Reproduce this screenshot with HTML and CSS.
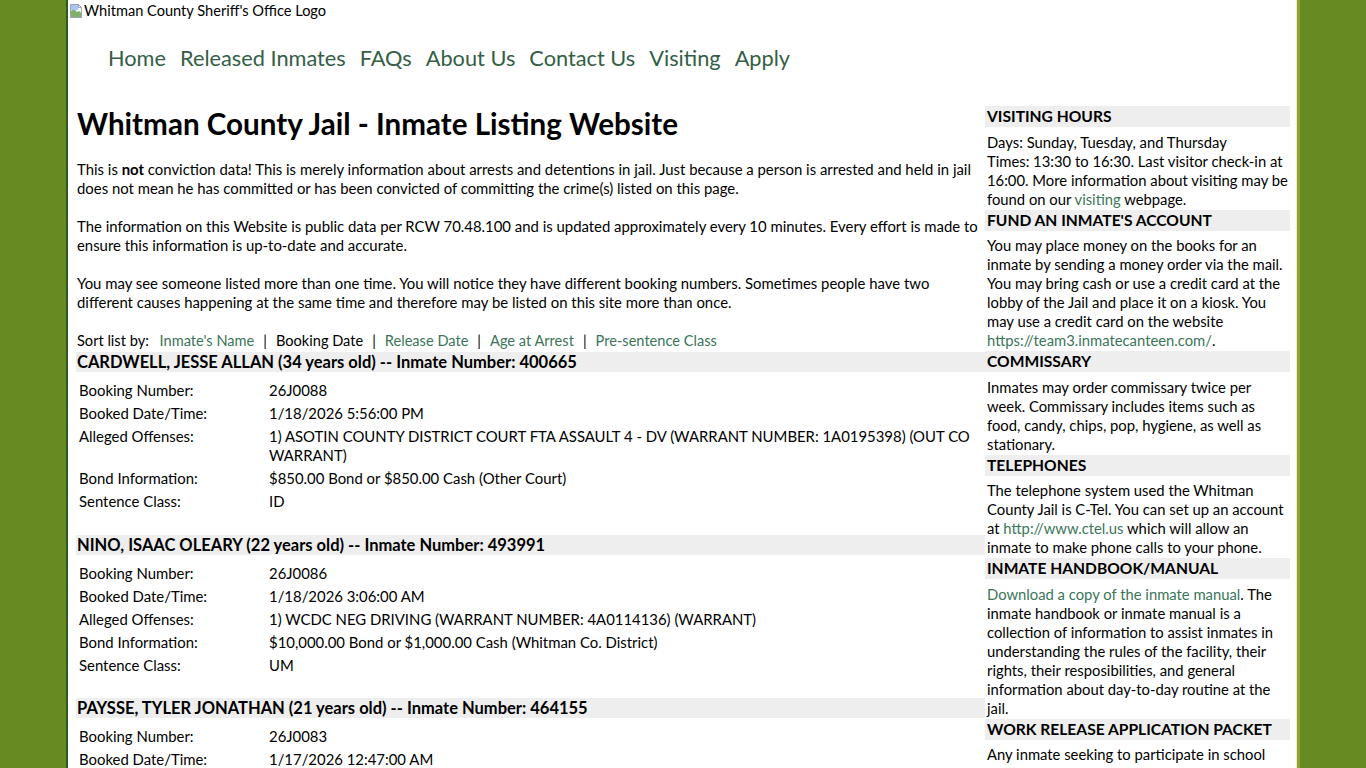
FILE: index.html
```html
<!DOCTYPE html>
<html lang="en">
<head>
<meta charset="utf-8">
<title>Whitman County Jail - Inmate Listing Website</title>
<link rel="stylesheet" href="styles.css">
</head>
<body>
<div class="page">
  <div class="logo">
    <svg class="broken" width="16" height="16" viewBox="0 0 16 16" aria-hidden="true">
      <path d="M2.5 1.5h8l3 3v10h-11z" fill="#f4f6fb" stroke="#9aa3b5"/>
      <path d="M3 8l3-2 3 3 2-1 2 2v4H3z" fill="#7fb06a"/>
      <rect x="3" y="2" width="7" height="5" fill="#a9c6ee"/>
      <path d="M10.5 1.5v3h3" fill="none" stroke="#9aa3b5"/>
    </svg><span class="logo-alt">Whitman County Sheriff's Office Logo</span>
  </div>
  <nav class="nav">
    <a href="#">Home</a>
    <a href="#">Released Inmates</a>
    <a href="#">FAQs</a>
    <a href="#">About Us</a>
    <a href="#">Contact Us</a>
    <a href="#">Visiting</a>
    <a href="#">Apply</a>
  </nav>
  <div class="content">
    <main class="main">
      <h1 class="title">Whitman County Jail - Inmate Listing Website</h1>
      <p class="intro">This is <b>not</b> conviction data! This is merely information about arrests and detentions in jail. Just because a person is arrested and held in jail does not mean he has committed or has been convicted of committing the crime(s) listed on this page.</p>
      <p class="intro">The information on this Website is public data per RCW 70.48.100 and is updated approximately every 10 minutes. Every effort is made to ensure this information is up-to-date and accurate.</p>
      <p class="intro">You may see someone listed more than one time. You will notice they have different booking numbers. Sometimes people have two different causes happening at the same time and therefore may be listed on this site more than once.</p>
      <div class="sort">Sort list by: <a href="#" class="sort-first">Inmate's Name</a><span class="sep">|</span><span class="current">Booking Date</span><span class="sep">|</span><a href="#">Release Date</a><span class="sep">|</span><a href="#">Age at Arrest</a><span class="sep">|</span><a href="#">Pre-sentence Class</a></div>

      <section class="inmate">
        <h2 class="inmate-name">CARDWELL, JESSE ALLAN (34 years old) -- Inmate Number: 400665</h2>
        <table class="details">
          <tr><td class="label">Booking Number:</td><td>26J0088</td></tr>
          <tr><td class="label">Booked Date/Time:</td><td>1/18/2026 5:56:00 PM</td></tr>
          <tr><td class="label">Alleged Offenses:</td><td>1) ASOTIN COUNTY DISTRICT COURT FTA ASSAULT 4 - DV (WARRANT NUMBER: 1A0195398) (OUT CO WARRANT)</td></tr>
          <tr><td class="label">Bond Information:</td><td>$850.00 Bond or $850.00 Cash (Other Court)</td></tr>
          <tr><td class="label">Sentence Class:</td><td>ID</td></tr>
        </table>
      </section>

      <section class="inmate">
        <h2 class="inmate-name">NINO, ISAAC OLEARY (22 years old) -- Inmate Number: 493991</h2>
        <table class="details">
          <tr><td class="label">Booking Number:</td><td>26J0086</td></tr>
          <tr><td class="label">Booked Date/Time:</td><td>1/18/2026 3:06:00 AM</td></tr>
          <tr><td class="label">Alleged Offenses:</td><td>1) WCDC NEG DRIVING (WARRANT NUMBER: 4A0114136) (WARRANT)</td></tr>
          <tr><td class="label">Bond Information:</td><td>$10,000.00 Bond or $1,000.00 Cash (Whitman Co. District)</td></tr>
          <tr><td class="label">Sentence Class:</td><td>UM</td></tr>
        </table>
      </section>

      <section class="inmate">
        <h2 class="inmate-name">PAYSSE, TYLER JONATHAN (21 years old) -- Inmate Number: 464155</h2>
        <table class="details">
          <tr><td class="label">Booking Number:</td><td>26J0083</td></tr>
          <tr><td class="label">Booked Date/Time:</td><td>1/17/2026 12:47:00 AM</td></tr>
        </table>
      </section>
    </main>

    <aside class="sidebar">
      <h3 class="side-title">Visiting Hours</h3>
      <p class="side-text">Days: Sunday, Tuesday, and Thursday<br>Times: 13:30 to 16:30. Last visitor check-in at 16:00. More information about visiting may be found on our <a href="#">visiting</a> webpage.</p>

      <h3 class="side-title">Fund an Inmate's Account</h3>
      <p class="side-text">You may place money on the books for an inmate by sending a money order via the mail. You may bring cash or use a credit card at the lobby of the Jail and place it on a kiosk. You may use a credit card on the website <a href="#">https://team3.inmatecanteen.com/</a>.</p>

      <h3 class="side-title">Commissary</h3>
      <p class="side-text">Inmates may order commissary twice per week. Commissary includes items such as food, candy, chips, pop, hygiene, as well as stationary.</p>

      <h3 class="side-title">Telephones</h3>
      <p class="side-text">The telephone system used the Whitman County Jail is C-Tel. You can set up an account at <a href="#">http://www.ctel.us</a> which will allow an inmate to make phone calls to your phone.</p>

      <h3 class="side-title">Inmate Handbook/Manual</h3>
      <p class="side-text"><a href="#">Download a copy of the inmate manual</a>. The inmate handbook or inmate manual is a collection of information to assist inmates in understanding the rules of the facility, their rights, their resposibilities, and general information about day-to-day routine at the jail.</p>

      <h3 class="side-title">Work Release Application Packet</h3>
      <p class="side-text">Any inmate seeking to participate in school</p>
    </aside>
  </div>
</div>
</body>
</html>
```

FILE: styles.css
```css
html, body {
  margin: 0;
  padding: 0;
}

body {
  background: #678a22;
  font-family: Lato, "Liberation Sans", Arial, sans-serif;
  font-size: 14.9px;
  color: #000;
}

a {
  color: #3b7559;
  text-decoration: none;
}

.page {
  width: 1229px;
  min-height: 768px;
  margin: 0 auto;
  background: #fff;
  border-left: 2px solid #2e5a1e;
  border-right: 3px solid #8ea22c;
  box-shadow: inset -1px 0 0 #ecebc8;
}

.logo {
  display: flex;
  align-items: center;
  height: 19px;
  padding-top: 1px;
  font-size: 14.6px;
  line-height: 19px;
}

.broken {
  flex: none;
  display: block;
}

.nav {
  display: flex;
  gap: 14px;
  margin-top: 23px;
  padding-left: 40px;
  font-size: 21.75px;
  line-height: 30px;
}

.nav a {
  color: #335e45;
}

.content {
  display: flex;
  align-items: flex-start;
  margin-top: 32px;
  padding: 0 7px 0 8px;
}

.main {
  width: 909px;
  flex: none;
}

.title {
  margin: 0.5px 0 19px 1px;
  font-size: 29.6px;
  line-height: 35px;
  font-weight: 700;
}

.intro {
  margin: 0 0 19px 1px;
  line-height: 19px;
}

.sort {
  margin: 0 0 2.5px 1px;
  font-size: 14.6px;
  line-height: 19px;
}

.sort-first {
  margin-left: 7px;
}

.sep {
  margin: 0 9px;
}

.inmate-name {
  margin: 0;
  padding-left: 1px;
  background: #eeeeee;
  font-size: 16.5px;
  line-height: 20px;
  font-weight: 700;
}

.details {
  width: 100%;
  margin: 6px 0 20.5px;
  border-spacing: 2px;
}

.details td {
  padding: 1px;
  line-height: 19px;
  vertical-align: top;
}

.details .label {
  width: 186px;
}

.sidebar {
  width: 305px;
  flex: none;
  margin-top: 1px;
  font-size: 14.8px;
}

.side-title {
  margin: 0;
  padding-left: 2px;
  background: #eeeeee;
  font-size: 15.6px;
  line-height: 21px;
  font-weight: 700;
  text-transform: uppercase;
}

.side-text {
  margin: 5.5px -1px 1px 0;
  padding-left: 2px;
  line-height: 19px;
}
```
